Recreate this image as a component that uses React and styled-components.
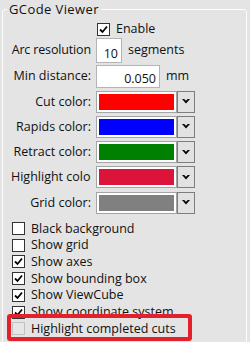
import styled, { createGlobalStyle, css } from 'styled-components';

const GlobalStyle = createGlobalStyle`
  html, body {
    margin: 0;
    height: 342px;
    overflow: hidden;
    background: #e4e4e4;
    font-family: "Open Sans", "Noto Sans", sans-serif;
    font-size: 12.5px;
    color: #111;
  }
`;

const colorRows = [
  { label: 'Cut color:', color: '#ff0000' },
  { label: 'Rapids color:', color: '#0000ff' },
  { label: 'Retract color:', color: '#008000' },
  { label: 'Highlight color:', color: '#dc143c', clip: true },
  { label: 'Grid color:', color: '#808080' },
];

const options = [
  { label: 'Black background', checked: false },
  { label: 'Show grid', checked: false },
  { label: 'Show axes', checked: true },
  { label: 'Show bounding box', checked: true },
  { label: 'Show ViewCube', checked: true },
  { label: 'Show coordinate system', checked: true },
  { label: 'Highlight completed cuts', checked: false, disabled: true, marked: true },
];

function CheckMark() {
  return (
    <svg width="11" height="11" viewBox="0 0 11 11">
      <polyline points="2,5.5 4.5,8 9,2.5" fill="none" stroke="#000" strokeWidth="1.8" />
    </svg>
  );
}

function Checkbox({ checked, disabled }) {
  return (
    <Box $disabled={disabled}>
      {checked && <CheckMark />}
    </Box>
  );
}

function ColorPicker({ color }) {
  return (
    <Picker>
      <ColorBox>
        <Swatch style={{ background: color }} />
      </ColorBox>
      <DropButton>
        <svg width="8" height="5" viewBox="0 0 8 5">
          <polygon points="0,0 2.2,0 4,1.8 5.8,0 8,0 4,4.5" fill="#000" />
        </svg>
      </DropButton>
    </Picker>
  );
}

export default function App() {
  return (
    <>
      <GlobalStyle />
      <Group>
        <Title>GCode Viewer</Title>
        <Form>
          <FieldRow $h={17}>
            <span />
            <Value $indent>
              <Checkbox checked />
              <span>Enable</span>
            </Value>
          </FieldRow>

          <FieldRow $h={26}>
            <Label $tight>Arc resolution</Label>
            <Value>
              <NumberBox $w={26} $h={25}>10</NumberBox>
              <span>segments</span>
            </Value>
          </FieldRow>

          <FieldRow $h={26}>
            <Label>Min distance:</Label>
            <Value>
              <NumberBox $w={64} $h={23}>0.050</NumberBox>
              <span>mm</span>
            </Value>
          </FieldRow>

          {colorRows.map((row) => (
            <FieldRow key={row.label} $h={25.25}>
              <Label $clip={row.clip}>{row.label}</Label>
              <ColorPicker color={row.color} />
            </FieldRow>
          ))}

          <OptionList>
            {options.map((opt) => (
              <CheckRow key={opt.label} $marked={opt.marked}>
                <Checkbox checked={opt.checked} disabled={opt.disabled} />
                <span>{opt.label}</span>
              </CheckRow>
            ))}
          </OptionList>
        </Form>
      </Group>
    </>
  );
}

const Group = styled.fieldset`
  margin: 0 3px 0 2px;
  padding: 0;
  min-width: 0;
  min-height: 360px;
  border: 1px solid #fdfdfd;
  border-radius: 3px;
`;

const Title = styled.legend`
  margin-left: 4px;
  padding: 0 2px;
  line-height: 18px;
  font-size: 13px;
  letter-spacing: 0.4px;
`;

const Form = styled.div`
  padding: 2px 0 0 8px;
  display: flex;
  flex-direction: column;
`;

const FieldRow = styled.div`
  height: ${(p) => p.$h}px;
  display: grid;
  grid-template-columns: 80px auto;
  column-gap: 5px;
  align-items: center;
`;

const Label = styled.span`
  white-space: nowrap;
  overflow: hidden;
  text-align: ${(p) => (p.$clip ? 'left' : 'right')};
  letter-spacing: ${(p) => (p.$tight ? '-0.15px' : 'normal')};
  line-height: 18px;
`;

const Value = styled.div`
  display: flex;
  align-items: center;
  gap: 6px;
  margin-left: ${(p) => (p.$indent ? '1px' : '0')};
  line-height: 18px;
`;

const NumberBox = styled.div`
  width: ${(p) => p.$w}px;
  height: ${(p) => p.$h}px;
  box-sizing: border-box;
  border: 1px solid #b4b4b4;
  background: #fff;
  display: flex;
  align-items: flex-end;
  justify-content: flex-end;
  padding: 0 3px 0 0;
  line-height: 17px;
`;

const Picker = styled.div`
  display: flex;
`;

const ColorBox = styled.div`
  width: 81px;
  height: 22px;
  box-sizing: border-box;
  border: 1px solid #a5a5a5;
  background: #fff;
  padding: 2px;
  display: flex;
`;

const Swatch = styled.div`
  flex: 1;
`;

const DropButton = styled.div`
  width: 18px;
  height: 22px;
  box-sizing: border-box;
  border: 1px solid #7d7d7d;
  background: #e2e2e2;
  display: flex;
  align-items: center;
  justify-content: center;
`;

const OptionList = styled.div`
  margin: 5px 0 0 1px;
  display: flex;
  flex-direction: column;
`;

const CheckRow = styled.div`
  position: relative;
  height: 16.7px;
  display: flex;
  align-items: center;
  gap: 6px;
  line-height: 16px;

  ${(p) =>
    p.$marked &&
    css`
      &::after {
        content: '';
        position: absolute;
        left: -5px;
        top: -6px;
        width: 185px;
        height: 27px;
        box-sizing: border-box;
        border: 4px solid #e3202b;
        border-radius: 3px;
      }
    `}
`;

const Box = styled.span`
  width: 13px;
  height: 13px;
  box-sizing: border-box;
  flex: none;
  border: 1px solid ${(p) => (p.$disabled ? '#c2c2c2' : '#333')};
  background: ${(p) => (p.$disabled ? '#e6e6e6' : '#fff')};
  display: inline-flex;
  align-items: center;
  justify-content: center;
`;
